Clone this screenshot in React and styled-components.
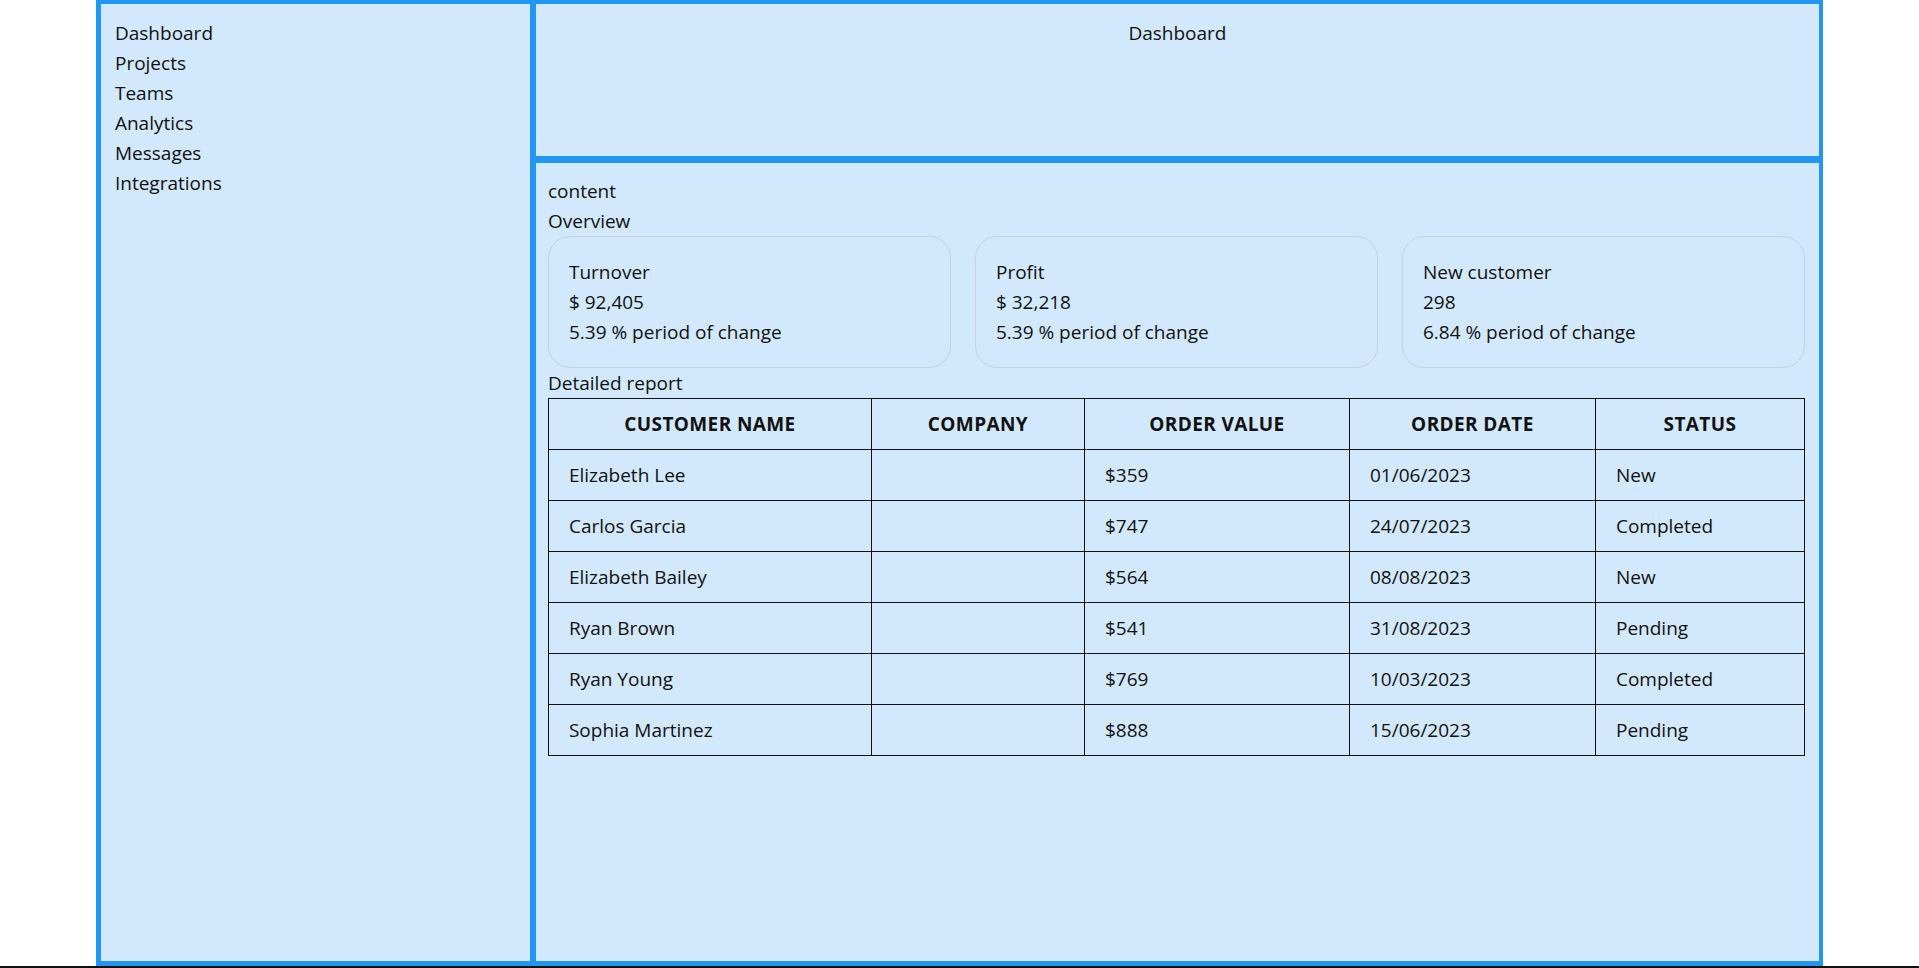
import styled, { createGlobalStyle } from "styled-components";

const GlobalStyle = createGlobalStyle`
  * {
    box-sizing: border-box;
  }
  body {
    margin: 0;
    font-family: "Segoe UI", "Open Sans", "Noto Sans", sans-serif;
    font-size: 19px;
    line-height: 30px;
    color: #111;
    background: #fff;
  }
`;

const Layout = styled.div`
  width: 90%;
  height: 966px;
  margin: 0 auto;
  display: grid;
  grid-template-columns: 429px 1fr;
  grid-template-rows: 152px 1fr;
  gap: 7px 6px;
  padding: 4px 6px 5px 5px;
  background: #2196f3;
`;

const Sidebar = styled.nav`
  grid-row: 1 / 3;
  background: #d2e8fc;
  padding: 14px 14px;
`;

const MenuItem = styled.div`
  cursor: pointer;
`;

const Header = styled.header`
  background: #d2e8fc;
  padding: 14px 13px;
  text-align: center;
`;

const Content = styled.main`
  background: #d2e8fc;
  padding: 13px 14px 0 12px;
`;

const Cards = styled.div`
  display: grid;
  grid-template-columns: repeat(3, 1fr);
  gap: 24px;
`;

const Card = styled.div`
  border: 1px solid #c6d3df;
  border-radius: 22px;
  padding: 20px;
`;

const Table = styled.table`
  width: 100%;
  border-collapse: collapse;
  table-layout: fixed;
  font-size: inherit;
`;

const Th = styled.th`
  width: ${(p) => p.$w}px;
  border: 1px solid #111;
  padding: 10px 20px;
  font-weight: 700;
  letter-spacing: 0.4px;
  text-transform: uppercase;
  text-align: center;
`;

const Td = styled.td`
  border: 1px solid #111;
  padding: 10px 20px;
  text-align: left;
`;

const BottomLine = styled.div`
  height: 2px;
  background: #111;
`;

const menu = ["Dashboard", "Projects", "Teams", "Analytics", "Messages", "Integrations"];

const stats = [
  { title: "Turnover", value: "$ 92,405", change: "5.39 % period of change" },
  { title: "Profit", value: "$ 32,218", change: "5.39 % period of change" },
  { title: "New customer", value: "298", change: "6.84 % period of change" },
];

const columns = [
  { label: "Customer name", w: 323 },
  { label: "Company", w: 213 },
  { label: "Order value", w: 265 },
  { label: "Order date", w: 246 },
  { label: "Status", w: 209 },
];

const orders = [
  { name: "Elizabeth Lee", company: "", value: "$359", date: "01/06/2023", status: "New" },
  { name: "Carlos Garcia", company: "", value: "$747", date: "24/07/2023", status: "Completed" },
  { name: "Elizabeth Bailey", company: "", value: "$564", date: "08/08/2023", status: "New" },
  { name: "Ryan Brown", company: "", value: "$541", date: "31/08/2023", status: "Pending" },
  { name: "Ryan Young", company: "", value: "$769", date: "10/03/2023", status: "Completed" },
  { name: "Sophia Martinez", company: "", value: "$888", date: "15/06/2023", status: "Pending" },
];

function App() {
  return (
    <>
      <GlobalStyle />
      <Layout>
        <Sidebar>
          {menu.map((item) => (
            <MenuItem key={item}>{item}</MenuItem>
          ))}
        </Sidebar>
        <Header>Dashboard</Header>
        <Content>
          <div>content</div>
          <div>Overview</div>
          <Cards>
            {stats.map((s) => (
              <Card key={s.title}>
                <div>{s.title}</div>
                <div>{s.value}</div>
                <div>{s.change}</div>
              </Card>
            ))}
          </Cards>
          <div>Detailed report</div>
          <Table>
            <thead>
              <tr>
                {columns.map((c) => (
                  <Th key={c.label} $w={c.w}>
                    {c.label}
                  </Th>
                ))}
              </tr>
            </thead>
            <tbody>
              {orders.map((o) => (
                <tr key={o.name}>
                  <Td>{o.name}</Td>
                  <Td>{o.company}</Td>
                  <Td>{o.value}</Td>
                  <Td>{o.date}</Td>
                  <Td>{o.status}</Td>
                </tr>
              ))}
            </tbody>
          </Table>
        </Content>
      </Layout>
      <BottomLine />
    </>
  );
}

export default App;
